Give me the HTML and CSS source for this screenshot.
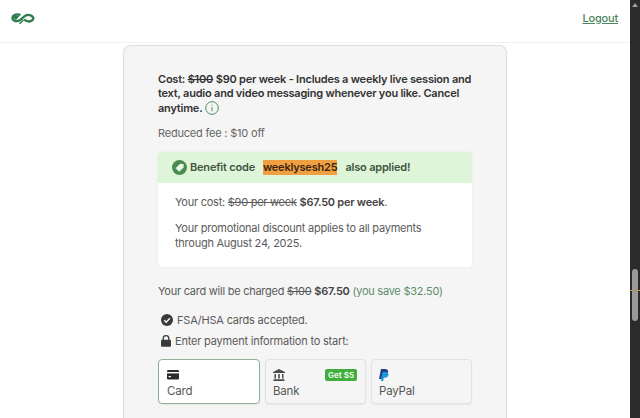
FILE: index.html
```html
<!DOCTYPE html>
<html lang="en">
<head>
    <meta charset="UTF-8">
    <meta name="viewport" content="width=device-width, initial-scale=1.0">
    <title>Checkout</title>
    <link rel="stylesheet" href="styles.css">
</head>
<body>
    <div class="page">
        <header class="topbar">
            <svg class="logo" width="24" height="11" viewBox="0 0 24 11">
                <path d="M9.500 2C6.500.6 2 1.500 1.500 4.800c-.3 2 2.700 3.800 5.500 3.200 3-.6 5-4.600 8.500-5.800 2.500-.8 6 .2 6.800 2.600.5 2-2.500 4-5.300 3.600-1.500-.2-2.800-1-3.800-2" fill="none" stroke="#2f7d4f" stroke-width="2.400"/>
                <path d="M2 4.500c1.500-2.200 4-2.700 6.500-1.500L5 7z" fill="#2f7d4f"/>
                <path d="M12.500 7 8.500 10.800" fill="none" stroke="#2f7d4f" stroke-width="1.500"/>
            </svg>
            <a class="logout" href="#">Logout</a>
        </header>

        <main class="content">
            <section class="card">
                <p class="cost">Cost: <s>$100</s> $90 per week - Includes a weekly live session and text, audio and video messaging whenever you like. Cancel anytime.
                    <svg class="info" width="14" height="14" viewBox="0 0 14 14">
                        <circle cx="7" cy="7" r="6.300" fill="none" stroke="#4f8a5f" stroke-width="1"/>
                        <path d="M7 6v4.200M7 3.600v1" stroke="#4f8a5f" stroke-width="1"/>
                    </svg>
                </p>
                <p class="reduced">Reduced fee : $10 off</p>

                <div class="benefit">
                    <div class="benefit-head">
                        <svg width="15" height="15" viewBox="0 0 15 15">
                            <circle cx="7.500" cy="7.500" r="7.500" fill="#4b8a4f"/>
                            <path d="M3.500 8.200 8 3.800l3.600.1.100 3.500-4.500 4.400z" fill="#e4f5e0"/>
                        </svg>
                        <span>Benefit code</span>
                        <mark class="code">weeklysesh25</mark>
                        <span>also applied!</span>
                    </div>
                    <div class="benefit-body">
                        <p>Your cost: <s>$90 per week</s> <b>$67.50 per week</b>.</p>
                        <p>Your promotional discount applies to all payments through August 24, 2025.</p>
                    </div>
                </div>

                <p class="charge">Your card will be charged <s>$100</s> <b>$67.50</b> <span class="save">(you save $32.50)</span></p>

                <p class="note">
                    <svg width="12" height="12" viewBox="0 0 12 12">
                        <circle cx="6" cy="6" r="6" fill="#3a3a3a"/>
                        <path d="M3.200 6.200 5.200 8.200 8.900 4.300" fill="none" stroke="#f5f5f5" stroke-width="1.500"/>
                    </svg>
                    FSA/HSA cards accepted.
                </p>
                <p class="note note-lock">
                    <svg width="10" height="12" viewBox="0 0 10 12">
                        <path d="M2.200 5V3.500a2.800 2.800 0 0 1 5.600 0V5" fill="none" stroke="#3a3a3a" stroke-width="1.300"/>
                        <rect y="4.800" width="10" height="7" rx="1" fill="#3a3a3a"/>
                    </svg>
                    Enter payment information to start:
                </p>

                <div class="tabs">
                    <div class="tab tab-active">
                        <svg width="12" height="10" viewBox="0 0 12 10">
                            <rect width="12" height="9.500" rx="1.200" fill="#2c2c2c"/>
                            <rect y="2" width="12" height="1.400" fill="#fff"/>
                            <rect x="1.500" y="6" width="2.500" height="1.200" fill="#fff"/>
                        </svg>
                        <span>Card</span>
                    </div>
                    <div class="tab">
                        <svg width="12" height="12" viewBox="0 0 12 12">
                            <path d="M6 0 12 3v1H0V3z" fill="#4a4a4a"/>
                            <path d="M1.500 5h1.500v4.500H1.500zM5.200 5h1.600v4.500H5.200zM9 5h1.500v4.500H9zM.5 10.200h11V12H.5z" fill="#4a4a4a"/>
                        </svg>
                        <span>Bank</span>
                        <em class="badge">Get $5</em>
                    </div>
                    <div class="tab">
                        <svg width="10" height="12" viewBox="0 0 10 12">
                            <path d="M2 0h4c2.500 0 3.500 1.500 3 3.500C8.500 5.500 7 6.500 5 6.500H3.500L2.700 10H0z" fill="#253b80"/>
                            <path d="M3.500 3h3.300c2 0 3 1 2.600 3-.4 1.800-1.700 2.800-3.500 2.800H4.800L4.200 12H1.900z" fill="#179bd7"/>
                        </svg>
                        <span>PayPal</span>
                    </div>
                </div>
            </section>
        </main>
    </div>

    <aside class="scrollbar">
        <div class="scroll-up"></div>
        <div class="scroll-thumb"><i></i></div>
    </aside>
</body>
</html>
```

FILE: styles.css
```css
* {
    box-sizing: border-box;
}

html, body {
    height: 100%;
}

body {
    margin: 0;
    display: flex;
    overflow: hidden;
    background-color: #ffffff;
    color: #4a4a4a;
    font-family: Inter, "Noto Sans", sans-serif;
    font-size: 11px;
    letter-spacing: -0.2px;
    line-height: 15px;
}

p {
    margin: 0;
}

s {
    text-decoration-thickness: 1px;
}

.page {
    flex: 1;
    min-width: 0;
}

.topbar {
    height: 43px;
    padding: 0 12px 5px 11px;
    display: flex;
    align-items: center;
    justify-content: space-between;
    border-bottom: 1px solid #f0f0f0;
}

.logo {
    display: block;
}

.logout {
    color: #4d8560;
    font-weight: 500;
}

.content {
    padding: 2px 123px 0;
}

.card {
    height: 400px;
    padding: 26px 34px 0;
    background-color: #f5f5f5;
    border: 1px solid #dcdcdc;
    border-bottom: 0;
    border-radius: 8px 8px 0 0;
}

.cost {
    font-weight: 600;
    letter-spacing: -0.22px;
    line-height: 14.300px;
    color: #333333;
}

.info {
    vertical-align: -3px;
}

.reduced {
    margin-top: 11px;
    color: #666666;
}

.benefit {
    margin-top: 11px;
    border-radius: 4px;
    background-color: #ffffff;
    box-shadow: 0 0 2px rgba(0, 0, 0, 0.08);
}

.benefit-head {
    height: 31px;
    padding: 0 14px;
    display: flex;
    align-items: center;
    gap: 3px;
    background-color: #def5da;
    border-radius: 4px 4px 0 0;
    font-weight: 600;
    color: #41563f;
}

.code {
    margin: 0 5px;
    background-color: #f0a040;
    color: #3a2410;
}

.benefit-body {
    padding: 12px 17px 0;
    height: 84px;
    letter-spacing: -0.25px;
    color: #5a5a5a;
}

.benefit-body p + p {
    margin-top: 11px;
}

.benefit-body b {
    font-weight: 600;
    color: #444444;
}

.charge {
    margin-top: 17px;
    letter-spacing: -0.25px;
    color: #5a5a5a;
}

.charge b {
    font-weight: 600;
    color: #444444;
}

.save {
    color: #5e8d6a;
}

.note {
    margin-top: 14px;
    padding-left: 3px;
    display: flex;
    align-items: center;
    gap: 4px;
    color: #5a5a5a;
}

.note-lock {
    margin-top: 6px;
}

.tabs {
    margin-top: 10px;
    display: flex;
    gap: 5px;
}

.tab {
    position: relative;
    flex: 1;
    height: 45px;
    padding: 9px 7px 0;
    display: flex;
    flex-direction: column;
    gap: 3px;
    background-color: #f5f5f5;
    border: 1px solid #e2e2e2;
    border-radius: 4px;
    box-shadow: 0 1px 2px rgba(0, 0, 0, 0.06);
    color: #555555;
    font-size: 11.5px;
}

.tab svg {
    height: 12px;
}

.tab-active {
    flex: 0 0 102px;
    padding-left: 8px;
    background-color: #ffffff;
    border-color: #8fb097;
}

.badge {
    position: absolute;
    top: 9px;
    right: 8px;
    height: 12px;
    padding: 0 3px;
    background-color: #3fae3f;
    border-radius: 2px;
    color: #e8f5e0;
    font-style: normal;
    font-weight: 700;
    font-size: 8px;
    letter-spacing: 0;
    line-height: 12px;
}

.scrollbar {
    flex: 0 0 10px;
    background-color: #2b2b2b;
    position: relative;
}

.scroll-up {
    margin: 3px auto 0;
    width: 0;
    border: 3px solid transparent;
    border-top: 0;
    border-bottom: 4px solid #a0a0a0;
}

.scroll-thumb {
    width: 6px;
    height: 52px;
    margin: 262px auto 0;
    background-color: #9a9a9a;
    border-radius: 3px;
}

.scroll-thumb i {
    display: block;
    position: absolute;
    left: 0;
    right: 0;
    top: 290px;
    height: 1px;
    background-color: #b89a60;
}
```
